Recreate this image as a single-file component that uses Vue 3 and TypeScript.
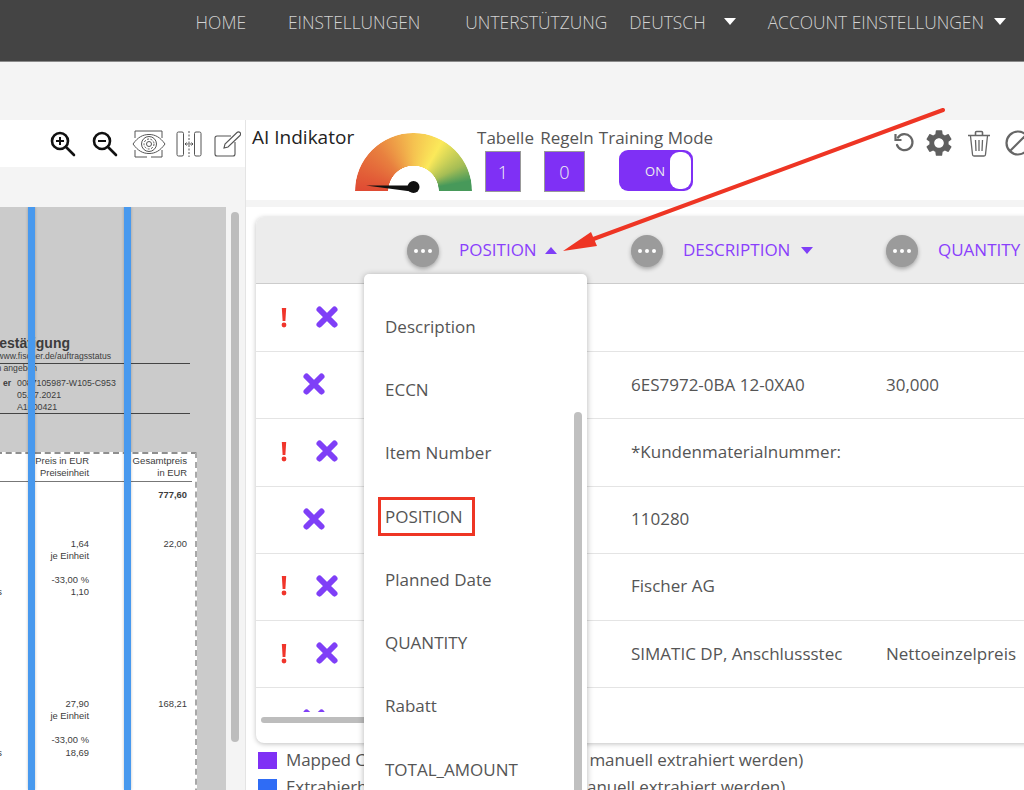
<script setup lang="ts">
interface DocText {
  text: string
  x: number
  y: number
  bold?: boolean
  size?: number
  right?: boolean
}

interface Row {
  alert: boolean
  description: string
  quantity: string
}

const navItems = [
  { label: 'HOME', cls: 'nav__item_home' },
  { label: 'EINSTELLUNGEN', cls: 'nav__item_settings' },
  { label: 'UNTERSTÜTZUNG', cls: 'nav__item_support' },
]

const docTop: DocText[] = [
  { text: 'bestätigung', x: 70, y: 338, bold: true, size: 14, right: true },
  { text: 'is: www.fischer.de/auftragsstatus', x: 111, y: 351, size: 8.6, right: true },
  { text: 'n angeben', x: 37, y: 363, size: 8.6, right: true },
  { text: 'er', x: 11, y: 378, bold: true, size: 8.6, right: true },
  { text: '0087105987-W105-C953', x: 17, y: 378, size: 8.8 },
  { text: '05.07.2021', x: 17, y: 390, size: 8.8 },
  { text: 'A1000421', x: 17, y: 402, size: 8.8 },
]

const docPaper: DocText[] = [
  { text: 'Preis in EUR', x: 89, y: 456, size: 9.4, right: true },
  { text: 'Preiseinheit', x: 89, y: 468, size: 9.4, right: true },
  { text: 'Gesamtpreis', x: 187, y: 456, size: 9.6, right: true },
  { text: 'in EUR', x: 187, y: 468, size: 9.4, right: true },
  { text: '777,60', x: 187, y: 490, size: 9.4, bold: true, right: true },
  { text: '1,64', x: 89, y: 539, size: 9.4, right: true },
  { text: 'je Einheit', x: 89, y: 551, size: 9.4, right: true },
  { text: '22,00', x: 187, y: 539, size: 9.4, right: true },
  { text: '-33,00 %', x: 89, y: 575, size: 9.4, right: true },
  { text: 's', x: 2, y: 587, size: 9.4, right: true },
  { text: '1,10', x: 89, y: 587, size: 9.4, right: true },
  { text: '27,90', x: 89, y: 699, size: 9.4, right: true },
  { text: 'je Einheit', x: 89, y: 711, size: 9.4, right: true },
  { text: '168,21', x: 187, y: 699, size: 9.4, right: true },
  { text: '-33,00 %', x: 89, y: 735, size: 9.4, right: true },
  { text: 's', x: 2, y: 748, size: 9.4, right: true },
  { text: '18,69', x: 89, y: 748, size: 9.4, right: true },
]

const docTexts = [...docTop, ...docPaper]

const docStyle = (t: DocText) => ({
  top: `${t.y - 207}px`,
  fontSize: `${t.size}px`,
  fontWeight: t.bold ? 700 : 400,
  ...(t.right ? { right: `${226 - t.x}px` } : { left: `${t.x}px` }),
})

const rows: Row[] = [
  { alert: true, description: '', quantity: '' },
  { alert: false, description: '6ES7972-0BA 12-0XA0', quantity: '30,000' },
  { alert: true, description: '*Kundenmaterialnummer:', quantity: '' },
  { alert: false, description: '110280', quantity: '' },
  { alert: true, description: 'Fischer AG', quantity: '' },
  { alert: true, description: 'SIMATIC DP, Anschlussstec', quantity: 'Nettoeinzelpreis' },
  { alert: false, description: '', quantity: '' },
]

const fields = ['Description', 'ECCN', 'Item Number', 'POSITION', 'Planned Date', 'QUANTITY', 'Rabatt', 'TOTAL_AMOUNT']
</script>

<template>
  <div class="app">
    <header class="nav">
      <span v-for="item in navItems" :key="item.label" class="nav__item" :class="item.cls">{{ item.label }}</span>
      <span class="nav__item">DEUTSCH</span>
      <span class="caret caret_nav caret_lang" />
      <span class="nav__item">ACCOUNT EINSTELLUNGEN</span>
      <span class="caret caret_nav" />
    </header>
    <div class="band" />

    <main class="main">
      <section class="viewer">
        <div class="viewer__tools">
          <svg class="tool" width="26" height="26" viewBox="0 0 26 26" fill="none" stroke="#111" stroke-width="2.6">
            <circle cx="10" cy="10" r="8" />
            <path d="M16 16l8 8" stroke-linecap="round" />
            <path d="M10 6v8M6 10h8" stroke-width="2" />
          </svg>
          <svg class="tool tool_out" width="26" height="26" viewBox="0 0 26 26" fill="none" stroke="#111" stroke-width="2.6">
            <circle cx="10" cy="10" r="8" />
            <path d="M16 16l8 8" stroke-linecap="round" />
            <path d="M6 10h8" stroke-width="2" />
          </svg>
          <svg class="tool tool_eye" width="34" height="28" viewBox="0 0 34 28" fill="none" stroke="#555" stroke-width="1">
            <path d="M3 8V1h27v7M3 20v7h12M19 27h11v-7" />
            <path d="M1 14C6 7 11 4.500 17 4.500S28 7 33 14C28 21 23 23.500 17 23.500S6 21 1 14z" fill="#fff" />
            <circle cx="17" cy="14" r="7.500" />
            <circle cx="17" cy="14" r="5" stroke-dasharray="2 1.500" />
            <circle cx="17" cy="14" r="2.500" />
          </svg>
          <svg class="tool tool_split" width="26" height="26" viewBox="0 0 26 26" fill="none" stroke="#555" stroke-width="1">
            <rect x="1" y="1" width="6.500" height="24" rx="1.500" />
            <rect x="18.500" y="1" width="6.500" height="24" rx="1.500" />
            <path d="M13 0v26" stroke-dasharray="2 1.500" />
            <path d="M9 13h8M10.500 11.500L9 13l1.500 1.500M15.500 11.500L17 13l-1.500 1.500" />
          </svg>
          <svg class="tool tool_edit" width="27" height="26" viewBox="0 0 27 26" fill="none" stroke="#555" stroke-width="1.100">
            <path d="M17 5H3a2 2 0 0 0-2 2v16a2 2 0 0 0 2 2h16a2 2 0 0 0 2-2V11" />
            <path d="M10 17l1-4L23 1.500a1.500 1.500 0 0 1 3 3L14 16z" />
          </svg>
        </div>
        <div class="viewer__gap" />
        <div class="viewer__body">
          <div class="doc">
            <div class="doc__rule doc__rule_a" />
            <div class="doc__rule doc__rule_b" />
            <div class="doc__paper">
              <div class="doc__rule doc__rule_c" />
            </div>
            <span
              v-for="(t, i) in docTexts"
              :key="i"
              class="doc__text"
              :style="docStyle(t)"
            >{{ t.text }}</span>
            <div class="doc__marker doc__marker_a" />
            <div class="doc__marker doc__marker_b" />
          </div>
          <div class="viewer__scroll" />
        </div>
      </section>

      <section class="editor">
        <div class="toolbar">
          <h2 class="toolbar__title">AI Indikator</h2>
          <div class="gauge">
            <div class="gauge__arc" />
            <svg class="gauge__needle" width="60" height="16" viewBox="0 0 60 16">
              <path d="M1 5.500L48 5.500 50 12z" fill="#111" />
              <circle cx="48.500" cy="7" r="6" fill="#111" />
            </svg>
          </div>
          <div class="stat stat_table">
            <span class="stat__label">Tabelle</span>
            <span class="stat__box">1</span>
          </div>
          <div class="stat stat_rules">
            <span class="stat__label">Regeln</span>
            <span class="stat__box stat__box_wide">0</span>
          </div>
          <div class="stat stat_mode">
            <span class="stat__label">Training Mode</span>
            <div class="switch">
              <span class="switch__text">ON</span>
              <span class="switch__knob" />
            </div>
          </div>
          <div class="toolbar__actions">
            <svg width="22" height="22" viewBox="0 0 22 22" fill="none" stroke="#666" stroke-width="2.200">
              <path d="M5 5.500A8 8 0 1 1 4 13" stroke-linecap="round" />
              <path d="M2.500 2v6h6" />
            </svg>
            <svg class="toolbar__gear" width="32" height="32" viewBox="0 0 24 24" fill="#5f5f5f">
              <path d="M19.14 12.94c.04-.3.06-.61.06-.94 0-.32-.02-.64-.07-.94l2.03-1.58c.18-.14.23-.41.12-.61l-1.92-3.32c-.12-.22-.37-.29-.59-.22l-2.39.96c-.5-.38-1.03-.7-1.62-.94l-.36-2.54c-.04-.24-.24-.41-.48-.41h-3.84c-.24 0-.43.17-.47.41l-.36 2.54c-.59.24-1.13.57-1.62.94l-2.39-.96c-.22-.08-.47 0-.59.22L2.740 8.870c-.12.21-.08.47.12.61l2.030 1.580c-.05.3-.09.63-.09.94s.02.64.07.94l-2.030 1.580c-.18.14-.23.41-.12.61l1.920 3.320c.12.22.37.29.59.22l2.390-.96c.5.38 1.030.7 1.620.94l.36 2.540c.05.24.24.41.48.41h3.840c.24 0 .44-.17.47-.41l.36-2.540c.59-.24 1.130-.56 1.620-.94l2.390.96c.22.08.47 0 .59-.22l1.920-3.320c.12-.22.07-.47-.12-.61l-2.010-1.580zM12 15.600c-1.980 0-3.600-1.620-3.600-3.600s1.620-3.600 3.600-3.600 3.600 1.620 3.600 3.600-1.620 3.600-3.600 3.600z" />
            </svg>
            <svg class="toolbar__trash" width="24" height="27" viewBox="0 0 24 27" fill="none" stroke="#666" stroke-width="1.300">
              <path d="M1 5.500h22M8.500 5V2.500a1 1 0 0 1 1-1h5a1 1 0 0 1 1 1V5" stroke-width="1.600" />
              <path d="M3.500 6l2 18.500a1.500 1.500 0 0 0 1.500 1.500h10a1.500 1.500 0 0 0 1.500-1.500L20.500 6" />
              <path d="M8.500 10l.5 11M12 10v11M15.500 10l-.5 11" />
            </svg>
            <svg class="toolbar__ban" width="26" height="26" viewBox="0 0 26 26" fill="none" stroke="#666" stroke-width="2.200">
              <circle cx="13" cy="13" r="11.500" />
              <path d="M5 21L21 5" />
            </svg>
          </div>
        </div>
        <div class="editor__gap" />

        <div class="card">
          <div class="table__head table__grid">
            <div class="head-cell head-cell_first">
              <span class="dots"><i /><i /><i /></span>
              <span class="head-cell__title">POSITION</span>
              <span class="caret caret_up" />
              <div class="menu">
                <div v-for="field in fields" :key="field" class="menu__item">
                  {{ field }}
                  <span v-if="field === 'POSITION'" class="menu__mark" />
                </div>
                <div class="menu__scroll" />
              </div>
            </div>
            <div class="head-cell">
              <span class="dots"><i /><i /><i /></span>
              <span class="head-cell__title">DESCRIPTION</span>
              <span class="caret caret_down" />
            </div>
            <div class="head-cell">
              <span class="dots"><i /><i /><i /></span>
              <span class="head-cell__title">QUANTITY</span>
            </div>
          </div>
          <div class="table__body">
            <div v-for="(row, i) in rows" :key="i" class="table__row table__grid">
              <div class="row-icons" :class="{ 'row-icons_alert': row.alert }">
                <svg v-if="row.alert" class="row-icons__alert" width="8" height="21" viewBox="0 0 8 21" fill="#f0352b">
                  <path d="M1.800 1h4.400l-.8 13H2.600z" />
                  <circle cx="4" cy="18" r="2.400" />
                </svg>
                <svg width="24" height="24" viewBox="0 0 24 24" stroke="#7f3ff7" stroke-width="6" stroke-linecap="round">
                  <path d="M4.500 4.500l15 15M19.500 4.500l-15 15" />
                </svg>
              </div>
              <div class="cell">{{ row.description }}</div>
              <div class="cell">{{ row.quantity }}</div>
            </div>
          </div>
          <div class="table__foot">
            <div class="table__scroll" />
          </div>
        </div>

        <div class="legend">
          <div class="legend__row">
            <span class="legend__swatch" />
            <span class="legend__text">Mapped Columns (müssen nicht mehr manuell extrahiert werden)</span>
          </div>
          <div class="legend__row">
            <span class="legend__swatch legend__swatch_blue" />
            <span class="legend__text">Extrahierbare Spalten (können auch manuell extrahiert werden)</span>
          </div>
        </div>
      </section>
    </main>

    <svg class="arrow" width="1024" height="790" viewBox="0 0 1024 790">
      <path d="M943 110L588 241" stroke="#ee3524" stroke-width="4" stroke-linecap="round" fill="none" />
      <path d="M563 251L591 232 597 246z" fill="#ee3524" />
    </svg>
  </div>
</template>

<style>
html,
body {
  margin: 0;
  background: #fff;
}
</style>

<style scoped>
.app {
  position: relative;
  width: 1024px;
  height: 790px;
  overflow: hidden;
  background: #fff;
  font-family: "Open Sans", "Liberation Sans", sans-serif;
  color: #555;
}

.nav {
  display: flex;
  align-items: center;
  justify-content: flex-end;
  box-sizing: border-box;
  height: 62px;
  padding: 0 18px 18px 0;
  background: #444;
  border-bottom: 1px solid #8a8a8a;
}

.nav__item {
  color: #d2d2d2;
  font-size: 17.400px;
  font-weight: 300;
  white-space: nowrap;
}

.nav__item_home {
  margin-right: 42px;
}

.nav__item_settings {
  margin-right: 45px;
}

.nav__item_support {
  margin-right: 22px;
}

.caret {
  width: 0;
  height: 0;
  border-left: 6px solid transparent;
  border-right: 6px solid transparent;
}

.caret_nav {
  margin-left: 10px;
  border-top: 7px solid #fff;
}

.caret_lang {
  margin-left: 18px;
  margin-right: 32px;
}

.caret_up {
  margin-left: 8px;
  border-bottom: 7px solid #7f3ff7;
}

.caret_down {
  margin-left: 11px;
  border-top: 7px solid #7f3ff7;
}

.band {
  height: 58px;
  background: #f4f4f4;
}

.main {
  display: flex;
  height: 670px;
}

.viewer {
  display: flex;
  flex-direction: column;
  flex: none;
  width: 245px;
  background: #f4f4f4;
  border-right: 1px solid #e4e4e4;
}

.viewer__tools {
  display: flex;
  align-items: center;
  height: 47px;
  padding-left: 50px;
  background: #fff;
}

.tool {
  flex: none;
}

.tool_out {
  margin-left: 16px;
}

.tool_eye {
  margin-left: 14px;
}

.tool_split {
  margin-left: 10px;
}

.tool_edit {
  margin-left: 12px;
}

.viewer__gap {
  height: 40px;
}

.viewer__body {
  display: flex;
  flex: 1;
  min-height: 0;
}

.doc {
  position: relative;
  flex: none;
  width: 226px;
  overflow: hidden;
  background: #cbcbcb;
}

.doc__paper {
  position: absolute;
  top: 245px;
  left: -4px;
  width: 199px;
  height: 400px;
  background: #fff;
  border-top: 2px dashed #8f8f8f;
  border-right: 2px dashed #a8a8a8;
}

.doc__rule {
  position: absolute;
  left: 0;
  width: 190px;
  height: 1px;
  background: #444;
}

.doc__rule_a {
  top: 156px;
}

.doc__rule_b {
  top: 206px;
}

.doc__rule_c {
  top: 27px;
  width: 196px;
  background: #777;
}

.doc__text {
  position: absolute;
  color: #3c3c3c;
  font-family: "Liberation Sans", Arial, sans-serif;
  line-height: 10px;
  white-space: nowrap;
}

.doc__marker {
  position: absolute;
  top: 0;
  bottom: 0;
  width: 7px;
  background: #4899ee;
  box-shadow: 0 0 3px rgba(0, 0, 0, 0.25);
}

.doc__marker_a {
  left: 28px;
}

.doc__marker_b {
  left: 124px;
}

.viewer__scroll {
  width: 8px;
  height: 530px;
  margin: 5px 0 0 5px;
  border-radius: 4px;
  background: #bdbdbd;
}

.editor {
  flex: 1;
  min-width: 0;
  background: #fff;
}

.toolbar {
  display: flex;
  height: 80px;
}

.toolbar__title {
  flex: none;
  width: 102px;
  margin: 4px 0 0 6px;
  color: #222;
  font-size: 19px;
  font-weight: 400;
  line-height: 26px;
  white-space: nowrap;
}

.gauge {
  position: relative;
  flex: none;
  width: 117px;
  height: 58px;
  margin: 13px 0 0 1px;
}

.gauge__arc {
  height: 100%;
  border-radius: 59px 59px 0 0;
  background: conic-gradient(from -90deg at 50% 100%, #df4a33 0deg, #e8803f 50deg, #f5c250 90deg, #fbe95a 120deg, #a5bd55 152deg, #47995a 170deg, #47995a 180deg);
  -webkit-mask: radial-gradient(circle at 50% 100%, transparent 25px, #000 25.500px);
  mask: radial-gradient(circle at 50% 100%, transparent 25px, #000 25.500px);
}

.gauge__needle {
  position: absolute;
  left: 10px;
  top: 47px;
}

.stat {
  display: flex;
  flex-direction: column;
  flex: none;
  align-items: center;
  margin-top: 6px;
}

.stat_table {
  width: 55px;
  margin-left: 6px;
}

.stat_rules {
  width: 54px;
  margin-left: 7px;
}

.stat_mode {
  width: 112px;
  margin-left: 6px;
}

.stat__label {
  color: #555;
  font-size: 17px;
  line-height: 23px;
  white-space: nowrap;
}

.stat__box {
  display: flex;
  align-items: center;
  justify-content: center;
  box-sizing: border-box;
  width: 36px;
  height: 41px;
  margin: 2px 5px 0 0;
  background: #7f30f5;
  border: 1px solid #999;
  color: #f2f2f2;
  font-size: 18px;
  font-weight: 300;
}

.stat__box_wide {
  width: 41px;
}

.switch {
  display: flex;
  align-items: center;
  justify-content: flex-end;
  box-sizing: border-box;
  width: 74px;
  height: 41px;
  margin-top: 1px;
  padding-right: 2px;
  border-radius: 9px;
  background: #7f30f5;
}

.switch__text {
  margin-right: 5px;
  color: #eee;
  font-size: 13px;
}

.switch__knob {
  width: 21px;
  height: 37px;
  border-radius: 9px;
  background: #fff;
}

.toolbar__actions {
  display: flex;
  flex: none;
  align-items: center;
  height: 46px;
  margin-left: 181px;
}

.toolbar__gear {
  flex: none;
  margin-left: 8px;
}

.toolbar__trash {
  flex: none;
  margin-left: 12px;
}

.toolbar__ban {
  flex: none;
  margin-left: 14px;
}

.editor__gap {
  height: 7px;
  background: #f4f4f4;
}

.card {
  width: 850px;
  margin: 10px 0 0 10px;
  border-radius: 8px;
  background: #fff;
  box-shadow: 0 1px 5px rgba(0, 0, 0, 0.25);
}

.table__grid {
  display: grid;
  grid-template-columns: 375px 255px 1fr;
}

.table__head {
  height: 67px;
  box-sizing: border-box;
  border-bottom: 1px solid #ccc;
  border-radius: 8px 8px 0 0;
  background: #ececec;
}

.head-cell {
  position: relative;
  display: flex;
  align-items: center;
  height: 67px;
}

.head-cell_first {
  padding-left: 151px;
}

.head-cell__title {
  margin: 0 0 2px 20px;
  color: #8a3ffc;
  font-size: 17px;
  white-space: nowrap;
}

.dots {
  display: flex;
  align-items: center;
  justify-content: center;
  gap: 3px;
  width: 32px;
  height: 32px;
  border-radius: 50%;
  background: #9b9b9b;
  box-shadow: 0 2px 4px rgba(0, 0, 0, 0.3);
}

.dots i {
  width: 4px;
  height: 4px;
  border-radius: 50%;
  background: #fff;
}

.table__body {
  height: 428px;
  padding-top: 1px;
  box-sizing: border-box;
  overflow: hidden;
}

.table__row {
  height: 67.200px;
  padding-bottom: 2px;
  box-sizing: border-box;
  align-items: center;
  border-bottom: 1px solid #e4e4e4;
}

.row-icons {
  display: flex;
  align-items: center;
  padding-left: 46px;
}

.row-icons_alert {
  padding-left: 24px;
}

.row-icons__alert {
  margin-right: 27px;
}

.cell {
  overflow: hidden;
  color: #555;
  font-size: 17px;
  white-space: nowrap;
}

.table__foot {
  height: 31px;
  padding: 5px 0 0 5px;
  box-sizing: border-box;
}

.table__scroll {
  width: 240px;
  height: 6px;
  border-radius: 3px;
  background: #bdbdbd;
}

.menu {
  position: absolute;
  top: 57px;
  left: 108px;
  z-index: 2;
  box-sizing: border-box;
  width: 223px;
  height: 600px;
  padding-top: 20.500px;
  border-radius: 5px;
  background: #fff;
  box-shadow: 0 1px 6px rgba(0, 0, 0, 0.3);
}

.menu__item {
  position: relative;
  display: flex;
  align-items: center;
  height: 63.300px;
  padding-left: 21px;
  color: #555;
  font-size: 17px;
}

.menu__mark {
  position: absolute;
  top: 13px;
  left: 14px;
  box-sizing: border-box;
  width: 97px;
  height: 39px;
  border: 3px solid #ee3524;
}

.menu__scroll {
  position: absolute;
  top: 138px;
  right: 5px;
  width: 8px;
  height: 500px;
  border-radius: 4px;
  background: #c0c0c0;
}

.legend {
  display: flex;
  flex-direction: column;
  gap: 5px;
  margin: 6px 0 0 12px;
}

.legend__row {
  display: flex;
  align-items: center;
  gap: 9px;
  height: 22px;
  color: #555;
  font-size: 17px;
  white-space: nowrap;
}

.legend__text {
  margin-bottom: 2px;
  letter-spacing: -0.100px;
}

.legend__swatch {
  flex: none;
  width: 19px;
  height: 17px;
  background: #7f30f5;
}

.legend__swatch_blue {
  background: #2f6cf5;
}

.arrow {
  position: absolute;
  top: 0;
  left: 0;
  z-index: 5;
  pointer-events: none;
}
</style>
